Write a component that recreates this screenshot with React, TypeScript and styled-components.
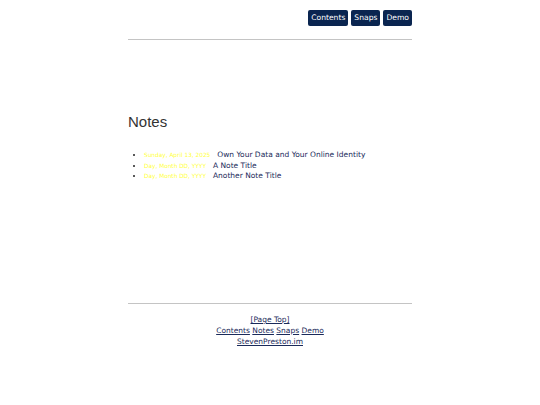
import React from 'react';
import styled, {createGlobalStyle} from 'styled-components';

const GlobalStyle = createGlobalStyle`
  body {
    margin: 0;
    background: #ffffff;
    font-family: "DejaVu Sans", Verdana, sans-serif;
  }
`;

const notes = [
    {date: 'Sunday, April 13, 2025', title: 'Own Your Data and Your Online Identity'},
    {date: 'Day, Month DD, YYYY', title: 'A Note Title'},
    {date: 'Day, Month DD, YYYY', title: 'Another Note Title'},
];

const App = () => {
    return (
        <Page>
            <GlobalStyle/>
            <Header>
                <Nav>
                    <NavButton href="#">Contents</NavButton>
                    <NavButton href="#">Snaps</NavButton>
                    <NavButton href="#">Demo</NavButton>
                </Nav>
            </Header>
            <Rule/>
            <Main>
                <Title>Notes</Title>
                <NoteList>
                    {notes.map((note, i) => (
                        <NoteItem key={i}>
                            <NoteDate>{note.date}</NoteDate>
                            <NoteLink href="#">{note.title}</NoteLink>
                        </NoteItem>
                    ))}
                </NoteList>
            </Main>
            <Rule/>
            <Footer>
                <FooterLine><FooterLink href="#">[Page Top]</FooterLink></FooterLine>
                <FooterLine>
                    <FooterLink href="#">Contents</FooterLink>{' '}
                    <FooterLink href="#">Notes</FooterLink>{' '}
                    <FooterLink href="#">Snaps</FooterLink>{' '}
                    <FooterLink href="#">Demo</FooterLink>
                </FooterLine>
                <FooterLine><FooterLink href="#">StevenPreston.im</FooterLink></FooterLine>
            </Footer>
        </Page>
    )
}

const Page = styled.div`
  width: 284px;
  margin: 0 auto;
`;

const Header = styled.header`
  padding-top: 10px;
  height: 39px;
  box-sizing: border-box;
`;

const Nav = styled.nav`
  display: flex;
  justify-content: flex-end;
  gap: 3px;
`;

const NavButton = styled.a`
  display: block;
  height: 16px;
  line-height: 16px;
  padding: 0 3px;
  background: #0a2550;
  color: #ffffff;
  border-radius: 2px;
  font-size: 7.6px;
  text-decoration: none;
`;

const Rule = styled.div`
  height: 1px;
  background: #c4c4c4;
`;

const Main = styled.main`
  height: 263px;
  padding-top: 73px;
  box-sizing: border-box;
`;

const Title = styled.h1`
  margin: 0;
  font-family: "Liberation Sans", Arial, sans-serif;
  font-weight: normal;
  font-size: 15px;
  line-height: 17px;
  color: #333333;
`;

const NoteList = styled.ul`
  margin: 20px 0 0;
  padding-left: 16px;
`;

const NoteItem = styled.li`
  font-size: 7.5px;
  line-height: 10.5px;
  color: #222222;
`;

const NoteDate = styled.span`
  font-size: 5.8px;
  color: #ffff40;
  margin-right: 7px;
`;

const NoteLink = styled.a`
  color: #1a2a5a;
  text-decoration: none;
`;

const Footer = styled.footer`
  padding-top: 10px;
  text-align: center;
`;

const FooterLine = styled.div`
  font-size: 7.5px;
  line-height: 11px;
`;

const FooterLink = styled.a`
  color: #1a2a5a;
`;

export default App;
